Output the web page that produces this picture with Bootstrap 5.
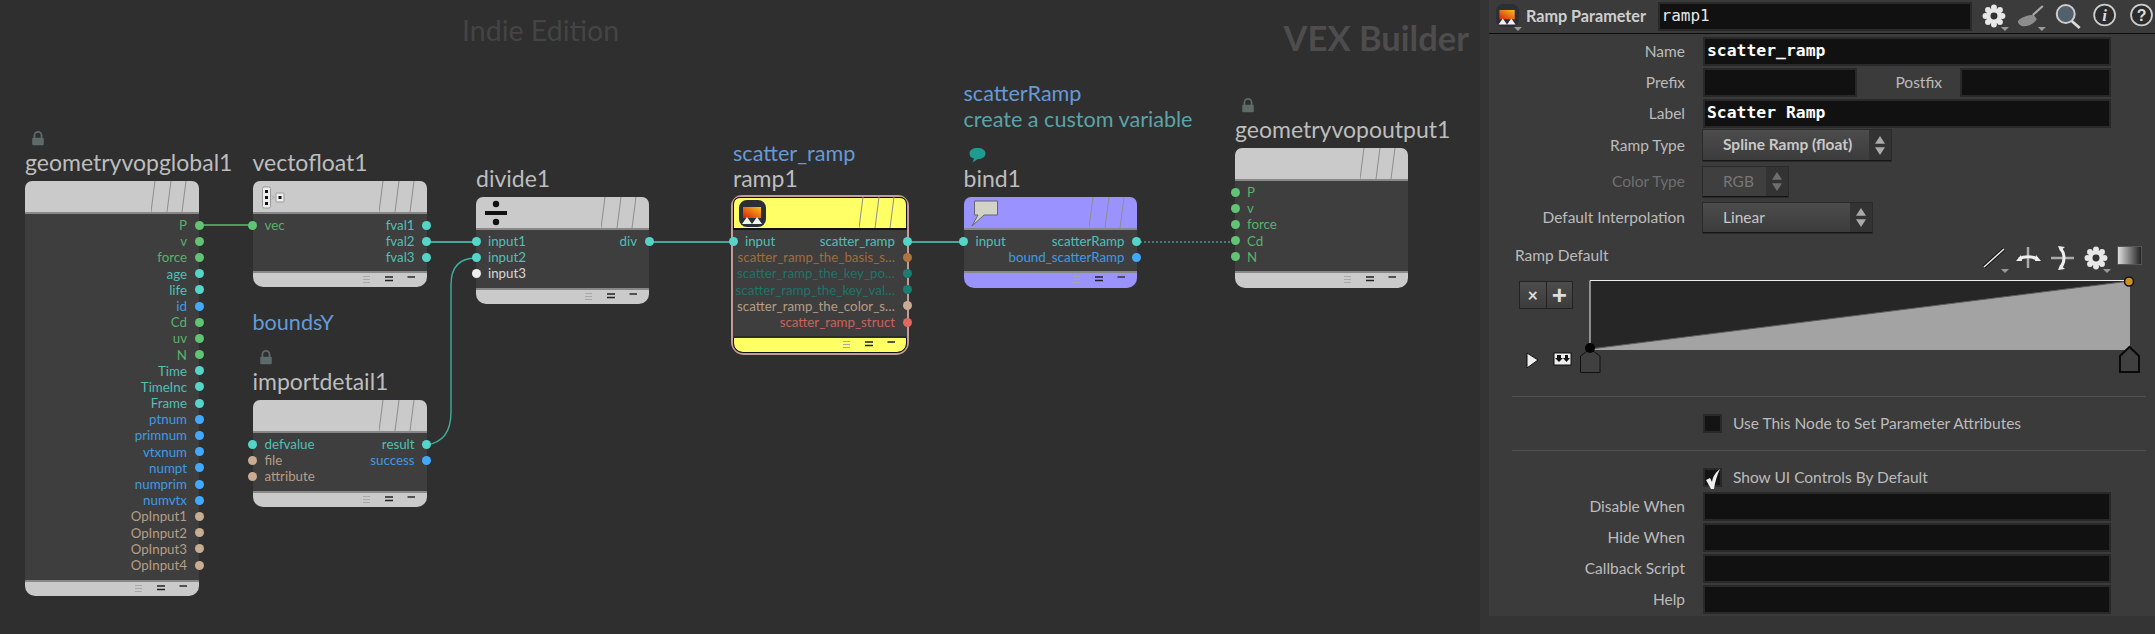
<!DOCTYPE html>
<html lang="en">

<head>
  <meta charset="UTF-8">
  <meta name="viewport" content="width=device-width, initial-scale=1.0">
  <title>Ramp Parameter - VEX Builder</title>
  <link rel="stylesheet" href="https://cdn.jsdelivr.net/npm/bootstrap@5.3.3/dist/css/bootstrap.min.css">
  <style>
    html, body { height: 100%; background: #2f2f2f; overflow: hidden; }
    body { font-family: "Lato", "Liberation Sans", sans-serif; }

    /* network editor */
    .graph { width: 1480px; height: 634px; background: #2f2f2f; position: relative; flex: none; overflow: hidden; }
    .graph-mark { position: absolute; white-space: nowrap; line-height: 1.2; }
    .mark-edition { left: 462px; top: 13px; font-size: 28.5px; color: #444; }
    .mark-context { right: 11px; top: 17px; font-size: 34.5px; font-weight: 700; color: #4d4d4d; }
    .wires { position: absolute; left: 0; top: 0; }

    .vnode { position: absolute; }
    .vnode-title { position: absolute; left: 0; bottom: 100%; margin-bottom: 6px; white-space: nowrap; line-height: 25px; font-size: 23px; color: #bdbdbd; }
    .title-note { color: #659ad8; font-size: 21.6px; line-height: 26px; }
    .title-note.alt { color: #5ba3a8; }
    .title-badge { display: block; height: 16px; margin-top: 15px; margin-bottom: 3px; margin-left: 5px; }
    .vnode-head { height: 33px; background: var(--tint); border-radius: 7px 7px 0 0; border-bottom: 2px solid #888; position: relative; }
    .vnode-body { background: #3e3e3e; padding-top: 3px; }
    .vnode-foot { background: var(--tint); border-radius: 0 0 10px 10px; border-top: 2px solid #888; position: relative; }
    .head-slashes { position: absolute; right: 12px; top: 0; }
    .head-icon { position: absolute; }
    .icon-split { left: 9px; top: 5px; }
    .icon-div { left: 8px; top: 0; }
    .icon-ramp { left: 6px; top: 3px; }
    .icon-note { left: 7px; top: 3px; }
    .foot-glyphs { position: absolute; right: 12px; top: 2px; }
    .vnode-sel { outline: 2px solid #c49a9a; border-radius: 9px 9px 11px 11px; }
    .vnode-sel .vnode-head { border-bottom-color: #111; box-shadow: inset 0 1px 0 #111, inset 1px 0 0 #111, inset -1px 0 0 #111; }
    .vnode-sel .vnode-foot { border-top-color: #2c2c2c; box-shadow: inset 0 -1px 0 #111, inset 1px 0 0 #111, inset -1px 0 0 #111; }
    .port-row { height: 16.2px; line-height: 16.2px; font-size: 13.3px; position: relative; display: flex; justify-content: space-between; padding: 0 12px; white-space: nowrap; }
    .port-row.out-only { justify-content: flex-end; padding-left: 0; }
    .port-dot { position: absolute; width: 9px; height: 9px; border-radius: 50%; top: 3.6px; background: var(--tone); }
    .port-dot.in { left: -4.5px; }
    .port-dot.out { right: -4.5px; }
    .port-name { color: var(--tone); opacity: .86; }

    /* parameter pane */
    .pane-wrap { width: 675px; height: 634px; background: #343434; flex: none; padding-left: 9px; }
    .pane { height: 616px; background: #3b3b3b; color: #bcbcbc; font-size: 15.5px; }
    .pane-top { height: 34px; border-bottom: 1px solid #0c0c0c; padding-left: 7px; }
    .type-name { font-weight: 700; font-size: 16.2px; color: #cfcfcf; margin-left: 3px; width: 132px; white-space: nowrap; }
    .field.form-control { background: #111; border: 2px solid #292929; border-radius: 0; color: #e8e8e8; font-family: "DejaVu Sans Mono", "Liberation Mono", monospace; font-size: 16px; line-height: 23px; padding: 0 2px; min-height: 0; flex: none; height: 29px; }
    .op-field.form-control { width: 314px; margin-top: 2px; }
    .field-b.form-control { font-weight: 700; color: #fff; font-size: 16.4px; }
    .field-full.form-control { width: 408px; }
    .field-prefix.form-control { width: 154px; }
    .field-postfix.form-control { width: 151px; }
    .parm-row { display: flex; align-items: center; margin-top: 2px; }
    .parm-row.row-first { margin-top: 3px; }
    .parm-label { width: 196px; text-align: right; white-space: nowrap; flex: none; margin-right: 18px; }
    .parm-label.dim { color: #6f6f6f; }
    .parm-label.label-postfix { width: 85px; }
    .menu-btn.btn { background: linear-gradient(#4c4c4c, #3c3c3c); border: 0; border-bottom: 1px solid #151515; border-radius: 0; color: #c8c8c8; font-size: 15.5px; padding: 0; display: flex; align-items: stretch; height: 30px; box-shadow: 0 0 0 1px #2a2a2a; }
    .menu-text { flex: 1; text-align: left; padding-left: 20px; line-height: 28px; white-space: nowrap; }
    .menu-arrows { width: 22px; background: #333; display: flex; align-items: center; justify-content: center; flex: none; }
    .menu-ramp.btn { width: 188px; font-weight: 700; height: 31px; }
    .menu-color.btn { width: 85px; color: #777; background: #3f3f3f; }
    .menu-interp.btn { width: 169px; }
    .parm-row.row-gap { margin-top: 6px; }
    .ramp-head { height: 25px; padding-left: 26px; padding-right: 13px; margin-top: 10px; }
    .tools-svg { overflow: visible; }
    .ramp-grad { width: 25px; height: 19px; margin-left: 4px; background: linear-gradient(90deg, #ddd, #222); border: 1px solid #555; }
    .ramp-area { padding: 13px 0 0 30px; height: 128px; position: relative; }
    .ramp-btns .btn { width: 27.5px; height: 28px; padding: 0; background: linear-gradient(#4c4c4c, #3c3c3c); border: 1px solid #222; border-radius: 0; color: #ddd; font-weight: 700; line-height: 24px; }
    .ramp-btns .btn.btn-x { font-size: 18px; }
    .ramp-btns .btn.btn-add { font-size: 26px; font-family: "Liberation Sans", sans-serif; }
    .ramp-svg { position: absolute; left: 0; top: 0; }
    .rule-line { border-top: 1px solid #505050; margin: 0 9px 0 23px; opacity: 1; }
    .rule-line.rule-lower { margin-top: 17px; }
    .parm-row.check-row { margin-top: 17px; line-height: 19px; }
    .check-box { width: 19px; height: 19px; background: #141414; border: 2px solid #292929; flex: none; position: relative; }
    .check-mark { position: absolute; left: 0; top: -2px; }
    .check-text { margin-left: 11px; white-space: nowrap; }
    .parm-row.row-after { margin-top: 5px; }
  </style>
</head>

<body>
  <div class="d-flex">
    <!-- Network -->
    <div class="graph" id="graph">
      <div class="graph-mark mark-edition">Indie Edition</div>
      <div class="graph-mark mark-context">VEX Builder</div>
      <svg class="wires" width="1480" height="634" fill="none" stroke-width="1.4">
        <path d="M199 225H253" stroke="#5dbb73"/>
        <path d="M426 242H476" stroke="#4fcfc2"/>
        <path d="M426 445C442 443 451 432 451 412V285C451 268 458 258 476 258" stroke="#3fae9f"/>
        <path d="M649 242H733" stroke="#4fcfc2"/>
        <path d="M907 242H963" stroke="#4fcfc2"/>
        <path d="M1136 242H1235" stroke="#4fcfc2" stroke-width="1" stroke-dasharray="2 2"/>
      </svg>
    </div>

    <!-- Parameter pane -->
    <div class="pane-wrap">
      <div class="pane">
        <div class="pane-top d-flex">
          <svg width="27" height="33" viewBox="0 0 27 33"><use href="#rampIcon" x="0" y="4" width="23" height="23"/><path d="M18 27h8l-4 4z" fill="#999"/></svg>
          <div class="type-name align-self-center">Ramp Parameter</div>
          <div class="field form-control op-field">ramp1</div>
          <svg class="ms-2" width="176" height="33" viewBox="1979 0 176 33">
            <use href="#gearIcon" x="1981" y="4" width="24" height="24"/>
            <path d="M2000 27h8l-4 4z" fill="#999"/>
            <path d="M2017 21c4-4 10-6 16-6l3 4c-3 5-9 8-15 7-3-1-4-3-4-5z" fill="#8d8d8d"/><path d="M2032 15l10-9" stroke="#aaa" stroke-width="2.200"/>
            <path d="M2037 27h8l-4 4z" fill="#999"/>
            <circle cx="2065" cy="14" r="9" fill="#51606a" stroke="#ccc" stroke-width="2"/><path d="M2071 21l8 7" stroke="#ddd" stroke-width="2.800"/>
            <circle cx="2104" cy="15" r="10.500" fill="#2c2c2c" stroke="#ccc" stroke-width="1.800"/>
            <text x="2104" y="21" text-anchor="middle" font-family="Liberation Serif, serif" font-style="italic" font-weight="700" font-size="17" fill="#ddd">i</text>
            <circle cx="2141" cy="15" r="10.500" fill="#2c2c2c" stroke="#ccc" stroke-width="1.800"/>
            <text x="2141" y="21" text-anchor="middle" font-family="Liberation Sans, sans-serif" font-weight="700" font-size="16" fill="#ddd">?</text>
          </svg>
        </div>

        <div class="parm-row row-first">
          <div class="parm-label">Name</div>
          <div class="field form-control field-full field-b">scatter_ramp</div>
        </div>
        <div class="parm-row">
          <div class="parm-label">Prefix</div>
          <div class="field form-control field-prefix"></div>
          <div class="parm-label label-postfix">Postfix</div>
          <div class="field form-control field-postfix"></div>
        </div>
        <div class="parm-row">
          <div class="parm-label">Label</div>
          <div class="field form-control field-full field-b">Scatter Ramp</div>
        </div>
        <div class="parm-row">
          <div class="parm-label">Ramp Type</div>
          <button type="button" class="btn menu-btn menu-ramp"><span class="menu-text">Spline Ramp (float)</span><span class="menu-arrows"><svg width="10" height="19"><use href="#updown" width="10" height="19"/></svg></span></button>
        </div>
        <div class="parm-row row-gap">
          <div class="parm-label dim">Color Type</div>
          <button type="button" class="btn menu-btn menu-color"><span class="menu-text">RGB</span><span class="menu-arrows"><svg width="10" height="19" opacity=".5"><use href="#updown" width="10" height="19"/></svg></span></button>
        </div>
        <div class="parm-row row-gap">
          <div class="parm-label">Default Interpolation</div>
          <button type="button" class="btn menu-btn menu-interp"><span class="menu-text">Linear</span><span class="menu-arrows"><svg width="10" height="19"><use href="#updown" width="10" height="19"/></svg></span></button>
        </div>

        <div class="ramp-head d-flex align-items-center">
          <div class="me-auto">Ramp Default</div>
          <svg class="tools-svg" width="132" height="25" viewBox="1980 243 132 25">
            <path d="M1983 267L2003 249" stroke="#111" stroke-width="3.500"/><path d="M1983 267L2003 249" stroke="#e4e4e4" stroke-width="1.600"/>
            <path d="M2000 269h8l-4 4z" fill="#999"/>
            <path d="M2027 247V268" stroke="#aaa" stroke-width="2.500"/>
            <path d="M2018 259c5-3 13-3 18 0" stroke="#eee" stroke-width="3" fill="none"/><path d="M2015 261l5-6 1 6zM2040 261l-5-6-1 6z" fill="#eee"/>
            <path d="M2050 258H2073" stroke="#aaa" stroke-width="2.500"/>
            <path d="M2060 249c4 5 4 13 0 18" stroke="#eee" stroke-width="3" fill="none"/><path d="M2057 246l7 1-5 4zM2057 270l7-1-5-4z" fill="#eee"/>
            <use href="#gearIcon" x="2083" y="246" width="24" height="24"/>
            <path d="M2102 269h8l-4 4z" fill="#999"/>
          </svg>
          <div class="ramp-grad"></div>
        </div>

        <div class="ramp-area">
          <svg class="ramp-svg" width="666" height="128" viewBox="1489 268 666 128">
            <rect x="1590" y="280" width="540" height="70" fill="#262626"/>
            <path d="M1590 349L2130 281V350H1590Z" fill="#a3a3a3"/>
            <path d="M1590 349L2130 281" stroke="#5c5c5c" stroke-width="1"/>
            <path d="M1590 350V280.500H2130" stroke="#eee" stroke-width="1" fill="none"/>
            <path d="M1527 353l11 7-11 8z" fill="#eee" stroke="#111"/>
            <rect x="1554" y="353" width="17" height="12" fill="#eee" stroke="#111"/><path d="M1557 355h4v3h2l-4 4-4-4h2zM1565 355h3v3h2l-3.500 4-3.500-4h2z" fill="#111"/>
            <path d="M1580.500 372.500V356l9.500-7 10 7V372.500Z" fill="#404040" stroke="#111" stroke-width="1"/>
            <circle cx="1590" cy="348" r="5" fill="#050505"/>
            <path d="M2120 372V356l9.500-9 9.500 9V372Z" fill="#404040" stroke="#0a0a0a" stroke-width="2"/>
            <circle cx="2129" cy="281.500" r="4.500" fill="#cf9020" stroke="#111" stroke-width="1.500"/>
          </svg>
          <div class="btn-group ramp-btns"><button type="button" class="btn btn-x">×</button><button type="button" class="btn btn-add">+</button></div>
        </div>

        <hr class="rule-line my-0">
        <div class="parm-row check-row">
          <div class="parm-label"></div>
          <div class="check-box"></div>
          <div class="check-text">Use This Node to Set Parameter Attributes</div>
        </div>
        <hr class="rule-line rule-lower mb-0">
        <div class="parm-row check-row">
          <div class="parm-label"></div>
          <div class="check-box"><svg class="check-mark" width="16" height="22" viewBox="0 0 16 22"><path d="M1 12l4-2 2 4c1-6 4-10 8-13-3 6-5 13-6 20H6z" fill="#eee"/></svg></div>
          <div class="check-text">Show UI Controls By Default</div>
        </div>
        <div class="parm-row row-after"><div class="parm-label">Disable When</div><div class="field form-control field-full"></div></div>
        <div class="parm-row"><div class="parm-label">Hide When</div><div class="field form-control field-full"></div></div>
        <div class="parm-row"><div class="parm-label">Callback Script</div><div class="field form-control field-full"></div></div>
        <div class="parm-row"><div class="parm-label">Help</div><div class="field form-control field-full"></div></div>
      </div>
    </div>
  </div>

  <!-- shared icons -->
  <svg width="0" height="0" class="position-absolute">
    <defs>
      <linearGradient id="rampFill" x1="0" x2="1" y1="1" y2="0"><stop offset="0" stop-color="#dd1c0c"/><stop offset="1" stop-color="#f4c51a"/></linearGradient>
      <symbol id="rampIcon" viewBox="0 0 27 27">
        <rect x="0" y="0" width="27" height="27" rx="8" fill="#2c3034"/>
        <rect x="4" y="7" width="18" height="11" fill="url(#rampFill)"/>
        <path d="M3 24l5-7 5 7zM13 24l5-7 5 7z" fill="#f2f2f2"/>
      </symbol>
      <symbol id="gearIcon" viewBox="0 0 22 22">
        <g fill="#e8e8e8"><circle cx="11" cy="11" r="7"/><circle cx="11" cy="3.200" r="2.700"/><circle cx="11" cy="18.800" r="2.700"/><circle cx="3.200" cy="11" r="2.700"/><circle cx="18.800" cy="11" r="2.700"/><circle cx="5.500" cy="5.500" r="2.700"/><circle cx="16.500" cy="5.500" r="2.700"/><circle cx="5.500" cy="16.500" r="2.700"/><circle cx="16.500" cy="16.500" r="2.700"/></g>
        <circle cx="11" cy="11" r="3.200" fill="#333"/>
      </symbol>
      <symbol id="updown" viewBox="0 0 9 17">
        <path d="M4.500 0L9 7H0zM0 10h9L4.500 17z" fill="#aaa"/>
      </symbol>
      <symbol id="lockIcon" viewBox="0 0 16 18">
        <path d="M4 8V5a4 4 0 0 1 8 0v3" fill="none" stroke="#5d6a6a" stroke-width="2"/>
        <rect x="1.500" y="7.500" width="13" height="8.500" rx="1" fill="#5d6a6a"/>
      </symbol>
    </defs>
  </svg>

  <script>
    // colours of the VEX data types
    const TONES = {
      vec: '#5fc474', flt: '#55d5c8', int: '#41aaff', str: '#c9ad92', any: '#eeeeee',
      brn: '#ad7540', tel: '#1a7d72', sal: '#e0685f'
    };

    // x, y, width, y of footer, y of bottom edge
    const NODES = [
      { name: 'geometryvopglobal1', x: 25, y: 181, w: 174, footY: 580, end: 596, lock: true, ins: [],
        outs: [['P','vec'],['v','vec'],['force','vec'],['age','flt'],['life','flt'],['id','int'],['Cd','vec'],['uv','vec'],['N','vec'],
               ['Time','flt'],['TimeInc','flt'],['Frame','flt'],['ptnum','int'],['primnum','int'],['vtxnum','int'],['numpt','int'],
               ['numprim','int'],['numvtx','int'],['OpInput1','str'],['OpInput2','str'],['OpInput3','str'],['OpInput4','str']] },
      { name: 'vectofloat1', x: 252.5, y: 181, w: 174, footY: 271, end: 287, icon: 'split',
        ins: [['vec','vec']], outs: [['fval1','flt'],['fval2','flt'],['fval3','flt']] },
      { name: 'importdetail1', x: 252.5, y: 400, w: 174, footY: 491, end: 507, lock: true, note: 'boundsY',
        ins: [['defvalue','flt'],['file','str'],['attribute','str']], outs: [['result','flt'],['success','int']] },
      { name: 'divide1', x: 476, y: 197, w: 173, footY: 288, end: 304, icon: 'div',
        ins: [['input1','flt'],['input2','flt'],['input3','any']], outs: [['div','flt']] },
      { name: 'ramp1', x: 733, y: 197, w: 174, footY: 336, end: 353, tint: '#ffff66', sel: true, icon: 'ramp', note: 'scatter_ramp',
        rows: [[['input','flt'],['scatter_ramp','flt']],[null,['scatter_ramp_the_basis_s…','brn']],[null,['scatter_ramp_the_key_po…','tel']],
               [null,['scatter_ramp_the_key_val…','tel']],[null,['scatter_ramp_the_color_s…','str']],[null,['scatter_ramp_struct','sal']]] },
      { name: 'bind1', x: 963.5, y: 197, w: 173, footY: 271, end: 288, tint: '#9a92ff', icon: 'note', bubble: true,
        notes: [['scatterRamp',''],['create a custom variable','alt']],
        ins: [['input','flt']], outs: [['scatterRamp','flt'],['bound_scatterRamp','int']] },
      { name: 'geometryvopoutput1', x: 1235, y: 148, w: 173, footY: 271, end: 288, lock: true,
        ins: [['P','vec'],['v','vec'],['force','vec'],['Cd','vec'],['N','vec']], outs: [] }
    ];

    const SLASHES = '<svg class="head-slashes" width="36" height="31" viewBox="0 0 36 31" fill="none" stroke="#8d8d8d"><path d="M4 0L0 31M20 0L16 31M35 0L31 31"/></svg>';
    const GLYPHS = '<svg class="foot-glyphs" width="52" height="10" viewBox="0 0 52 10"><path d="M0 1.500H7M0 4.500H7M0 7.500H7" stroke="#a8a8a8"/><path d="M22 2H30M22 5.500H30" stroke="#222" stroke-width="1.300"/><path d="M52 2H44.500" stroke="#444" stroke-width="1.800"/></svg>';
    const ICONS = {
      split: '<svg class="head-icon icon-split" width="23" height="23" viewBox="0 0 23 23"><rect x=".5" y="1" width="8" height="21" rx="1.500" fill="#eee" stroke="#999"/><rect x="14" y="7" width="8" height="9" rx="1" fill="#eee" stroke="#999"/><path d="M3 4h3v3H3zM3 10h3v3H3zM3 16h3v3H3zM16.500 10h3v3h-3z" fill="#111"/><path d="M9.500 9.500l3 2-3 2" fill="none" stroke="#aaa"/></svg>',
      div: '<svg class="head-icon icon-div" width="24" height="31" viewBox="0 0 24 31"><circle cx="12" cy="7" r="3.200" fill="#111"/><circle cx="12" cy="25" r="3.200" fill="#111"/><rect x="1" y="14" width="22" height="4" fill="#111"/></svg>',
      ramp: '<svg class="head-icon icon-ramp" width="27" height="27"><use href="#rampIcon" width="27" height="27"/></svg>',
      note: '<svg class="head-icon icon-note" width="28" height="27" viewBox="0 0 28 27"><path d="M3.500 1H26.500V15H13L1 26L7 15H3.500Z" fill="#d2d2c8" stroke="#666"/></svg>'
    };

    const graph = document.getElementById('graph');

    function portLabel(p, side) {
      const tone = `--tone:${TONES[p[1]]}`;
      return `<span class="port-name" style="${tone}">${p[0]}</span><span class="port-dot ${side}" style="${tone}"></span>`;
    }

    function portRow(left, right) {
      return `<div class="port-row${left ? '' : ' out-only'}">` + (left ? portLabel(left, 'in') : '') + (right ? portLabel(right, 'out') : '') + '</div>';
    }

    NODES.forEach(n => {
      const el = document.createElement('div');
      el.className = 'vnode' + (n.sel ? ' vnode-sel' : '');
      el.style.cssText = `left:${n.x}px;top:${n.y}px;width:${n.w}px;--tint:${n.tint || '#cacaca'}`;

      let rows = n.rows;
      if (!rows) {
        rows = [];
        const count = Math.max(n.ins.length, n.outs.length);
        for (let i = 0; i < count; i++) rows.push([n.ins[i], n.outs[i]]);
      }

      let title = '';
      if (n.note) title += `<div class="title-note">${n.note}</div>`;
      (n.notes || []).forEach(t => { title += `<div class="title-note ${t[1]}">${t[0]}</div>`; });
      if (n.lock) title += '<svg class="title-badge" width="16" height="16" viewBox="0 0 16 17"><use href="#lockIcon"/></svg>';
      if (n.bubble) title += '<svg class="title-badge" width="17" height="16" viewBox="0 0 17 16"><path d="M8.500 1C13 1 16.500 3 16.500 6.500S13 12 9 12L3.500 15.500 5 11.500C2 11 .5 9 .5 6.500.5 3 4 1 8.500 1Z" fill="#1f9c92"/></svg>';
      title += `<div>${n.name}</div>`;

      el.innerHTML = `<div class="vnode-title">${title}</div>
        <div class="vnode-head">${n.icon ? ICONS[n.icon] : ''}${SLASHES}</div>
        <div class="vnode-body" style="height:${n.footY - n.y - 33}px">${rows.map(r => portRow(r[0], r[1])).join('')}</div>
        <div class="vnode-foot" style="height:${n.end - n.footY}px">${GLYPHS}</div>`;
      graph.appendChild(el);
    });
  </script>

  <script src="https://cdn.jsdelivr.net/npm/bootstrap@5.3.3/dist/js/bootstrap.bundle.min.js"></script>
</body>

</html>
